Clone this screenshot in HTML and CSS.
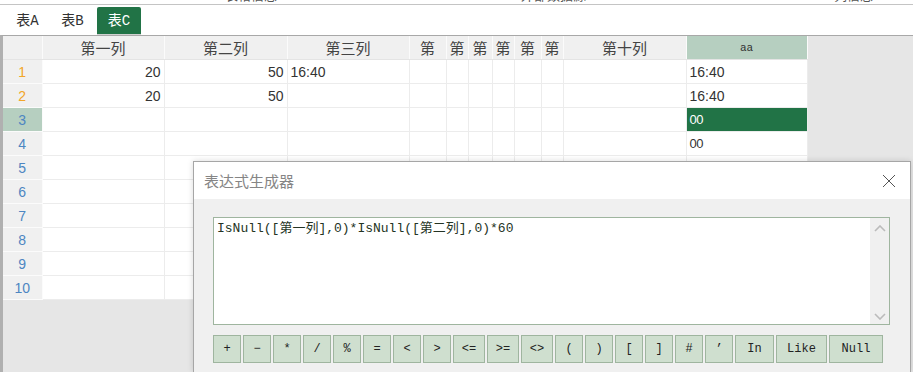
FILE: index.html
```html
<!DOCTYPE html>
<html lang="zh">
<head>
    <meta charset="UTF-8">
    <meta name="viewport" content="width=device-width, initial-scale=1.0">
    <title>表达式生成器</title>
    <link rel="stylesheet" href="styles.css">
</head>
<body>

<!-- Cut-off strip of the window above -->
<div class="top-strip">
    <span class="frag frag-1">表格信息</span>
    <span class="frag frag-2">外部数据源</span>
    <span class="frag frag-3">列信息</span>
</div>

<!-- Sheet tabs -->
<div class="tabs">
    <div class="tab">表A</div>
    <div class="tab">表B</div>
    <div class="tab active">表C</div>
</div>

<!-- Sheet -->
<div class="sheet">
    <table class="grid">
        <colgroup>
            <col style="width:39px"><col style="width:122px"><col style="width:123px"><col style="width:122px">
            <col style="width:37px"><col style="width:22px"><col style="width:24px"><col style="width:22px">
            <col style="width:27px"><col style="width:22px"><col style="width:123px"><col style="width:121px">
        </colgroup>
        <thead>
            <tr>
                <th class="corner"></th>
                <th>第一列</th><th>第二列</th><th>第三列</th>
                <th>第</th><th>第</th><th>第</th><th>第</th><th>第</th><th>第</th>
                <th>第十列</th>
                <th class="hl">aa</th>
            </tr>
        </thead>
        <tbody id="grid-body"></tbody>
    </table>
</div>

<!-- Expression builder dialog -->
<div class="dialog">
    <div class="dialog-title">
        <span>表达式生成器</span>
        <svg class="close" width="14" height="14" viewBox="0 0 14 14">
            <path d="M1 1 L13 13 M13 1 L1 13" stroke="#555" stroke-width="1" fill="none"/>
        </svg>
    </div>
    <div class="dialog-body">
        <div class="expr-box">
            <div class="expr-text">IsNull([第一列],0)*IsNull([第二列],0)*60</div>
            <div class="scrollbar">
                <svg width="12" height="8" viewBox="0 0 12 8"><path d="M1 6 L6 1 L11 6" stroke="#bbb" stroke-width="1.6" fill="none"/></svg>
                <svg width="12" height="8" viewBox="0 0 12 8"><path d="M1 2 L6 7 L11 2" stroke="#bbb" stroke-width="1.6" fill="none"/></svg>
            </div>
        </div>
        <div class="ops" id="ops"></div>
    </div>
</div>

<script>
    // Sample rows: [col1, col2, col3, aa]
    const rows = [
        ['20', '50', '16:40', '16:40'],
        ['20', '50', '', '16:40'],
        ['', '', '', '00'],
        ['', '', '', '00'],
        ['', '', '', '00'],
        ['', '', '', ''],
        ['', '', '', ''],
        ['', '', '', ''],
        ['', '', '', ''],
        ['', '', '', '']
    ];

    function loadGrid() {
        const body = document.getElementById('grid-body');
        rows.forEach((r, i) => {
            const tr = document.createElement('tr');
            let cls = i < 2 ? 'rn new' : 'rn';
            if (i === 2) cls += ' cur';
            let html = `<td class="${cls}">${i + 1}</td>`;
            html += `<td class="num">${r[0]}</td><td class="num">${r[1]}</td><td>${r[2]}</td>`;
            for (let k = 0; k < 7; k++) html += '<td></td>';
            const sel = i === 2 ? ' sel' : '';
            const small = r[3] === '00' ? ' small' : '';
            html += `<td class="aa${sel}${small}">${r[3]}</td>`;
            tr.innerHTML = html;
            body.appendChild(tr);
        });
    }

    // Operator buttons of the builder
    const ops = ['+', '−', '*', '/', '%', '=', '<', '>', '<=', '>=', '<>', '(', ')', '[', ']', '#', '’', 'In', 'Like', 'Null'];

    function loadOps() {
        const box = document.getElementById('ops');
        ops.forEach(op => {
            const b = document.createElement('button');
            b.textContent = op;
            if (op.length === 2 && op !== 'In') b.className = 'mid';
            if (op === 'In') b.className = 'w-in';
            if (op === 'Like') b.className = 'w-like';
            if (op === 'Null') b.className = 'w-null';
            box.appendChild(b);
        });
    }

    loadGrid();
    loadOps();
</script>

</body>
</html>
```

FILE: styles.css
```css
body {
    margin: 0;
    padding: 0;
    background-color: #fff;
    font-family: "Liberation Sans", "Noto Sans CJK SC", sans-serif;
    color: #333;
    width: 913px;
    height: 372px;
    overflow: hidden;
    position: relative;
}
.top-strip {
    height: 4px;
    overflow: hidden;
    border-bottom: 1px solid #c4c4c4;
    position: relative;
}
.frag {
    position: absolute;
    top: -11px;
    font-size: 13px;
    line-height: 14px;
    color: #555;
}
.frag-1 { left: 225px; }
.frag-2 { left: 521px; }
.frag-3 { left: 834px; }
.tabs {
    display: flex;
    align-items: flex-end;
    height: 30px;
    padding-left: 5px;
}
.tab {
    width: 45px;
    height: 28px;
    line-height: 28px;
    text-align: center;
    font-family: "Liberation Mono", "Noto Sans CJK SC", monospace;
    font-size: 14px;
    color: #333;
}
.tab.active {
    width: 44px;
    margin-left: 2px;
    background-color: #217346;
    color: #fff;
    border-radius: 2px 2px 0 0;
    border-bottom: 1px solid #d0d0d0;
    height: 27px;
}
.sheet {
    border-top: 1px solid #a8a8a8;
    border-left: 3px solid #b0b0b0;
    background-color: #e6e6e6;
    height: 336px;
}
.grid {
    border-collapse: collapse;
    table-layout: fixed;
    width: 804px;
    background-color: #fff;
}
.grid th {
    height: 23px;
    padding: 0;
    background-color: #f0f0f0;
    border-right: 1px solid #fbfbfb;
    border-bottom: 1px solid #e4e4e4;
    font-family: "Noto Sans CJK SC", sans-serif;
    font-weight: normal;
    font-size: 15px;
    color: #444;
    line-height: 22px;
    overflow: hidden;
    white-space: nowrap;
}
.grid th.hl {
    background-color: #b6cfc0;
    font-family: "Liberation Mono", monospace;
    font-size: 11px;
    color: #333;
}
.grid td {
    height: 23px;
    padding: 0 3px;
    border-right: 1px solid #ececec;
    border-bottom: 1px solid #ececec;
    font-size: 14px;
    color: #333;
    white-space: nowrap;
    overflow: hidden;
}
.grid td.num {
    text-align: right;
}
.grid td.rn {
    background-color: #f0f0f0;
    border-right: 1px solid #fbfbfb;
    border-bottom: 1px solid #fbfbfb;
    text-align: center;
    color: #4d86c2;
    font-size: 14px;
}
.grid td.rn.new {
    color: #f2a629;
}
.grid td.rn.cur {
    background-color: #b6cfc0;
}
.grid td.small {
    font-size: 13px;
    letter-spacing: -0.5px;
}
.grid td.sel {
    background-color: #217346;
    color: #fff;
}
.dialog {
    position: absolute;
    left: 193px;
    top: 161px;
    width: 716px;
    height: 210px;
    background-color: #f0f0f0;
    border: 1px solid #a6a6a6;
    border-bottom: none;
    box-shadow: 0 0 6px rgba(0, 0, 0, 0.15);
    overflow: hidden;
}
.dialog-title {
    height: 37px;
    background-color: #fff;
    display: flex;
    align-items: center;
    justify-content: space-between;
    padding: 0 14px 0 10px;
    font-family: "Noto Sans CJK SC", sans-serif;
    font-size: 15px;
    color: #858585;
}
.dialog-body {
    padding: 18px 20px 0 19px;
}
.expr-box {
    display: flex;
    height: 106px;
    border: 1px solid #9fb59f;
    background-color: #fff;
}
.expr-text {
    flex: 1;
    padding: 2px 3px;
    font-family: "Liberation Mono", "Noto Sans CJK SC", monospace;
    font-size: 13px;
    line-height: 17px;
    color: #243424;
}
.scrollbar {
    width: 19px;
    background-color: #f0f0f0;
    display: flex;
    flex-direction: column;
    justify-content: space-between;
    align-items: center;
    padding: 7px 0 4px;
}
.ops {
    display: flex;
    gap: 2px;
    margin-top: 10px;
}
.ops button {
    width: 28px;
    height: 28px;
    padding: 0;
    background-color: #cfdfcf;
    border: 1px solid #9fb59f;
    font-family: "Liberation Mono", monospace;
    font-size: 12px;
    color: #222;
    cursor: pointer;
}
.ops button.mid {
    width: 32px;
}
.ops button.w-in {
    width: 39px;
}
.ops button.w-like {
    width: 51px;
}
.ops button.w-null {
    width: 54px;
}
```
